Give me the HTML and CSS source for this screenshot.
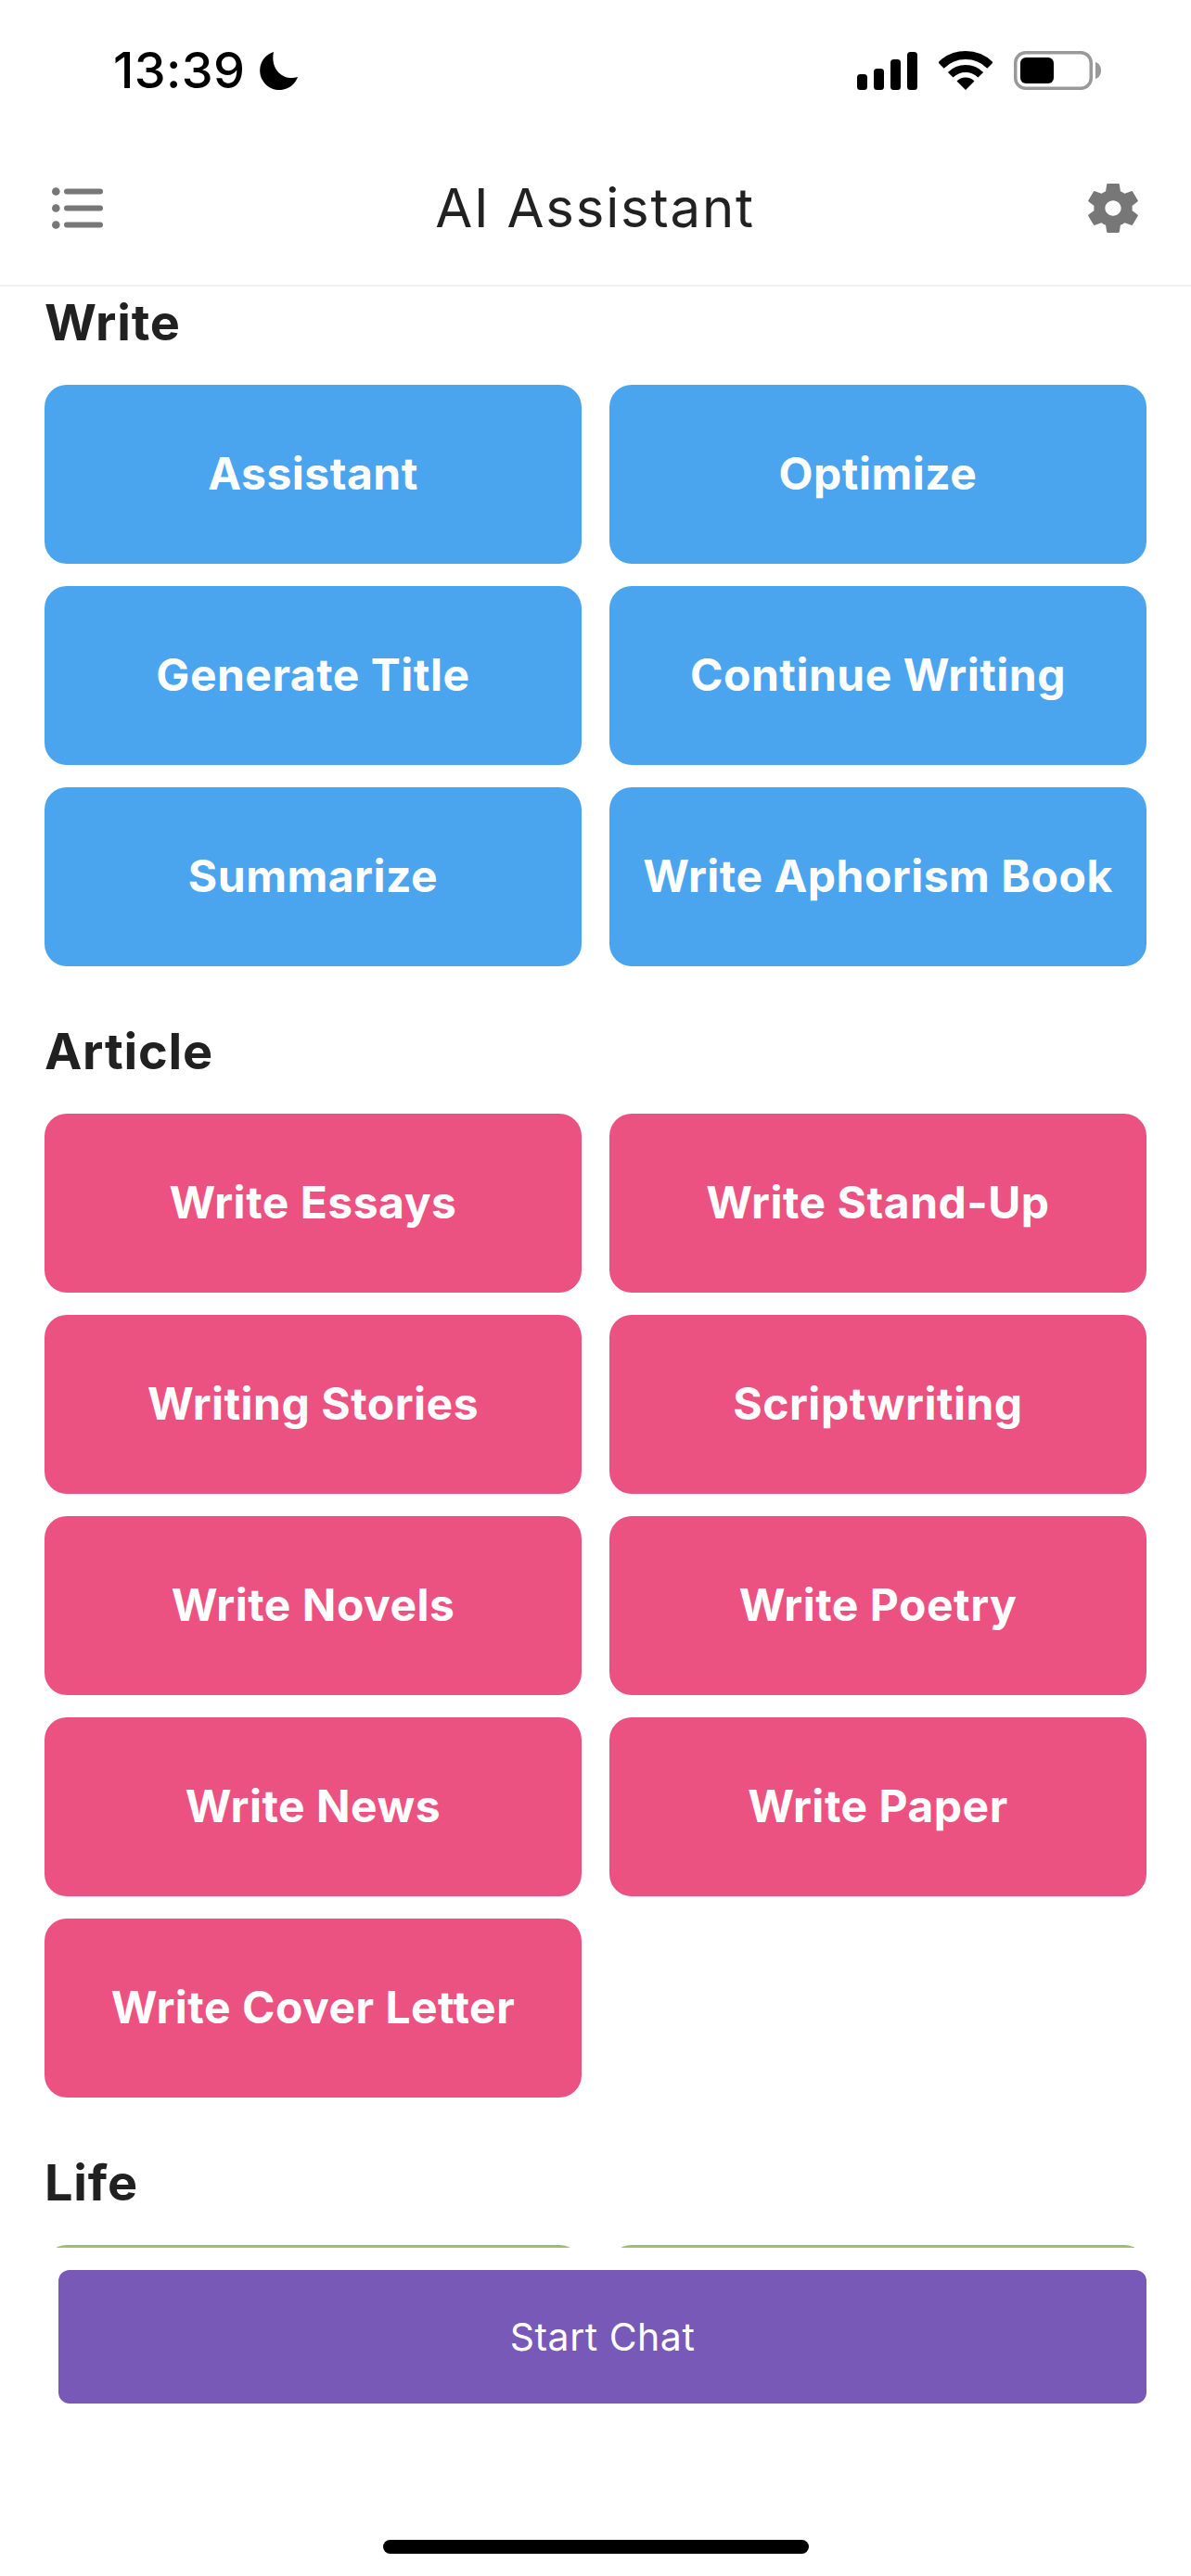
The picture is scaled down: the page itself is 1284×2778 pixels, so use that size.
FILE: index.html
```html
<!DOCTYPE html>
<html>
	<head>
		<meta charset="UTF-8">
		<title>AI Assistant</title>
		<link rel="stylesheet" href="styles.css">
	</head>
	<body>
		<div class="statusbar">
			<div class="clock">
				<span class="time">13:39</span>
				<svg class="moon" width="42" height="41" viewBox="0 0 42 41"><path d="M16 0A21 21 0 1 0 42 27C26 32 12 18 16 0Z"/></svg>
			</div>
			<div class="sysicons">
				<svg width="65" height="41" viewBox="0 0 65 41">
					<rect x="0" y="24" width="11" height="17" rx="3.5"/>
					<rect x="18" y="18" width="11" height="23" rx="3.5"/>
					<rect x="36" y="8" width="11" height="33" rx="3.5"/>
					<rect x="54" y="0" width="11" height="41" rx="3.5"/>
				</svg>
				<svg width="58" height="42" viewBox="0 0 58 42">
					<path d="M2.5 15.5A37.5 37.5 0 0 1 55.5 15.5" fill="none" stroke="#000" stroke-width="9"/>
					<path d="M12.7 25.7A23 23 0 0 1 45.3 25.7" fill="none" stroke="#000" stroke-width="8"/>
					<path d="M29 42L19.5 32.5A13.5 13.5 0 0 1 38.5 32.5Z"/>
				</svg>
				<svg width="94" height="42" viewBox="0 0 94 42">
					<rect x="1.75" y="1.75" width="81.5" height="38.5" rx="11" fill="none" stroke="#999" stroke-width="3.5"/>
					<rect x="7" y="7" width="36" height="28" rx="6"/>
					<path d="M88 12C92 13 94 17 94 21C94 25 92 29 88 30Z" fill="#999"/>
				</svg>
			</div>
		</div>

		<div class="header">
			<div class="side">
				<svg width="55" height="45" viewBox="0 0 55 45">
					<circle cx="4.3" cy="4.5" r="4.3"/>
					<circle cx="4.3" cy="22.5" r="4.3"/>
					<circle cx="4.3" cy="40.5" r="4.3"/>
					<rect x="13" y="1.5" width="42" height="6" rx="3"/>
					<rect x="13" y="19.5" width="42" height="6" rx="3"/>
					<rect x="13" y="37.5" width="42" height="6" rx="3"/>
				</svg>
			</div>
			<h1 class="title">AI Assistant</h1>
			<div class="side">
				<svg width="54" height="55" viewBox="2.6 2 18.8 20" preserveAspectRatio="none"><path fill-rule="evenodd" d="M19.14 12.94c.04-.3.06-.61.06-.94 0-.32-.02-.64-.07-.94l2.03-1.58c.18-.14.23-.41.12-.61l-1.92-3.32c-.12-.22-.37-.29-.59-.22l-2.39.96c-.5-.38-1.03-.7-1.62-.94l-.36-2.54c-.04-.24-.24-.41-.48-.41h-3.84c-.24 0-.43.17-.47.41l-.36 2.54c-.59.24-1.13.57-1.62.94l-2.39-.96c-.22-.08-.47 0-.59.22L2.74 8.87c-.12.21-.08.47.12.61l2.03 1.58c-.05.3-.09.63-.09.94s.02.64.07.94l-2.03 1.58c-.18.14-.23.41-.12.61l1.92 3.32c.12.22.37.29.59.22l2.39-.96c.5.38 1.03.7 1.62.94l.36 2.54c.05.24.24.41.48.41h3.84c.24 0 .44-.17.47-.41l.36-2.54c.59-.24 1.13-.56 1.62-.94l2.39.96c.22.08.47 0 .59-.22l1.92-3.32c.12-.22.07-.47-.12-.61l-2.01-1.58zM12 15c-1.65 0-3-1.35-3-3s1.35-3 3-3 3 1.35 3 3-1.35 3-3 3z"/></svg>
			</div>
		</div>

		<div class="content">
			<div class="section">
				<h2>Write</h2>
				<div class="grid blue">
					<div class="item">Assistant</div>
					<div class="item">Optimize</div>
					<div class="item">Generate Title</div>
					<div class="item">Continue Writing</div>
					<div class="item">Summarize</div>
					<div class="item">Write Aphorism Book</div>
				</div>
			</div>
			<div class="section">
				<h2>Article</h2>
				<div class="grid pink">
					<div class="item">Write Essays</div>
					<div class="item">Write Stand-Up</div>
					<div class="item">Writing Stories</div>
					<div class="item">Scriptwriting</div>
					<div class="item">Write Novels</div>
					<div class="item">Write Poetry</div>
					<div class="item">Write News</div>
					<div class="item">Write Paper</div>
					<div class="item">Write Cover Letter</div>
				</div>
			</div>
			<div class="section">
				<h2>Life</h2>
				<div class="grid green">
					<div class="item"></div>
					<div class="item"></div>
				</div>
			</div>
		</div>

		<div class="footer">
			<div class="start">Start Chat</div>
		</div>
		<div class="homebar"></div>
	</body>
</html>
```

FILE: styles.css
```css
*{margin: 0;padding: 0;box-sizing: border-box;}
body{width: 1284px;height: 2778px;overflow: hidden;background: #fff;font-family: "Inter","Liberation Sans",sans-serif;color: #212121;}

.statusbar{height: 141px;padding: 55px 97px 0 122px;display: flex;justify-content: space-between;align-items: flex-start;}
.clock{display: flex;align-items: center;gap: 14px;}
.time{font-size: 54px;font-weight: 500;line-height: 42px;letter-spacing: .4px;color: #000;}
.sysicons{display: flex;align-items: flex-end;gap: 23px;}
.statusbar svg{display: block;}

.header{height: 168px;padding: 0 57px 0 56px;border-bottom: 2px solid #f1f1f1;display: flex;justify-content: space-between;align-items: center;}
.side{width: 55px;display: flex;justify-content: flex-end;}
.side svg{display: block;fill: #777;}
.title{font-size: 58px;font-weight: 400;line-height: 68px;letter-spacing: 1.8px;}

.content{height: 2115px;overflow: hidden;padding: 7px 48px 0;}
.section{margin-bottom: 60px;}
h2{font-size: 54px;font-weight: 700;line-height: 64px;margin-bottom: 35px;letter-spacing: .8px;}
.grid{display: grid;grid-template-columns: 1fr 1fr;column-gap: 30px;row-gap: 24px;}
.item{height: 193px;padding-bottom: 2px;border-radius: 24px;display: flex;justify-content: center;align-items: center;color: #fff;font-size: 48px;font-weight: 700;letter-spacing: .5px;}
.blue .item{background: #4ba5ee;}
.pink .item{background: #ec5281;}
.green .item{background: #9bc063;}

.footer{padding: 24px 48px 0 63px;}
.start{height: 144px;border-radius: 12px;background: #7959b8;color: #fff;font-size: 41px;letter-spacing: .5px;display: flex;justify-content: center;align-items: center;}
.homebar{width: 459px;height: 15px;margin: 147px 0 0 413px;border-radius: 8px;background: #000;}
```
